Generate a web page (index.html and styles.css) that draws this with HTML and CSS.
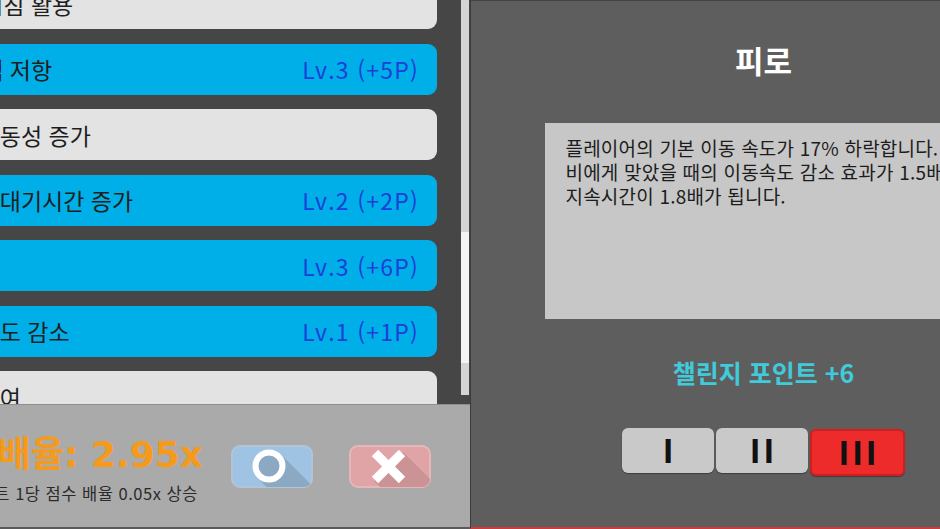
FILE: index.html
```html
<!DOCTYPE html>
<html lang="ko">
<head>
<meta charset="utf-8">
<title>챌린지 설정</title>
<link rel="stylesheet" href="styles.css">
</head>
<body>
<div class="screen">
  <section class="left">
    <div class="scroll-area">
      <div class="list">
        <div class="item off"><span class="name shifted">가시침 활용</span></div>
        <div class="item on"><span class="name shifted">넉백 저항</span><span class="lv">Lv.3 (+5P)</span></div>
        <div class="item off"><span class="name">적 이동성 증가</span></div>
        <div class="item on"><span class="name">스킬 대기시간 증가</span><span class="lv">Lv.2 (+2P)</span></div>
        <div class="item on"><span class="name blank">피로</span><span class="lv">Lv.3 (+6P)</span></div>
        <div class="item on"><span class="name">적 속도 감소</span><span class="lv">Lv.1 (+1P)</span></div>
        <div class="item off"><span class="name">독 부여</span></div>
      </div>
      <div class="scrollbar"><div class="thumb"></div></div>
    </div>
    <div class="bottom">
      <div class="score">
        <div class="rate">점수 배율: 2.95x</div>
        <div class="rate-note">포인트 1당 점수 배율 0.05x 상승</div>
      </div>
      <div class="actions">
        <svg class="act" width="82" height="43" viewBox="0 0 82 43">
          <defs><clipPath id="ok-clip"><rect x="1" y="1" width="80" height="41" rx="8"/></clipPath></defs>
          <rect x="1" y="1" width="80" height="41" rx="8" fill="#9fc3e3" stroke="#b3c5d5" stroke-width="2"/>
          <polygon points="49.7,9.3 109.7,69.3 86.3,92.7 26.3,32.7" fill="#8ca9c4" clip-path="url(#ok-clip)"/>
          <circle cx="38" cy="21" r="13.5" fill="#8ca9c4" stroke="#ffffff" stroke-width="6"/>
        </svg>
        <svg class="act" width="82" height="43" viewBox="0 0 82 43">
          <defs><clipPath id="no-clip"><rect x="1" y="1" width="80" height="41" rx="8"/></clipPath></defs>
          <rect x="1" y="1" width="80" height="41" rx="8" fill="#e0a3a6" stroke="#e6b7b9" stroke-width="2"/>
          <polygon points="25,36 54,7 114,67 85,96" fill="#cc9396" clip-path="url(#no-clip)"/>
          <line x1="26" y1="8" x2="53" y2="35" stroke="#ffffff" stroke-width="9"/>
          <line x1="53" y1="8" x2="26" y2="35" stroke="#ffffff" stroke-width="9"/>
        </svg>
      </div>
    </div>
  </section>
  <section class="right">
    <h1 class="title">피로</h1>
    <div class="desc">
      <p>플레이어의 기본 이동 속도가 17% 하락합니다.<br>비에게 맞았을 때의 이동속도 감소 효과가 1.5배가 되고<br>지속시간이 1.8배가 됩니다.</p>
    </div>
    <div class="points">챌린지 포인트 +6</div>
    <div class="levels">
      <div class="lvbtn">I</div>
      <div class="lvbtn">II</div>
      <div class="lvbtn sel">III</div>
    </div>
  </section>
</div>
</body>
</html>
```
FILE: styles.css
```css
html, body {
  margin: 0;
  height: 529px;
  overflow: hidden;
  background: #474646;
}

body {
  font-family: "Noto Sans CJK KR", "Noto Sans", sans-serif;
}

.screen {
  display: flex;
  width: 1060px;
  height: 529px;
}

/* ---- left: challenge list ---- */
.left {
  flex: 0 0 470px;
  display: flex;
  flex-direction: column;
  background: #474646;
}

.scroll-area {
  height: 404px;
  display: flex;
  overflow: hidden;
}

.list {
  flex: 0 0 437px;
  display: flex;
  flex-direction: column;
  gap: 14.5px;
  margin-top: -22px;
}

.item {
  flex: 0 0 51px;
  margin-left: -62px;
  padding: 0 18px 0 13px;
  display: flex;
  align-items: center;
  justify-content: space-between;
  border-radius: 9px;
  font-size: 23px;
  color: #1e1e1e;
  white-space: nowrap;
}

.item.on { background: #00aee8; }
.item.off { background: #e3e3e3; }

.name.shifted { margin-left: 10px; }
.name.blank { visibility: hidden; }

.lv {
  color: #1e3fd8;
  font-size: 23px;
  letter-spacing: 1.2px;
}

.scrollbar {
  flex: 0 0 8px;
  margin-left: 24px;
  height: 395px;
  background: #d4d4d4;
}

.thumb {
  margin-top: 232px;
  height: 131px;
  background: #f4f4f4;
}

/* ---- left: score multiplier ---- */
.bottom {
  flex: 1;
  display: flex;
  background: #aaaaaa;
  border-top: 1px solid #8e8e8e;
  border-bottom: 2px solid #5a5a5a;
}

.score {
  flex: 0 0 231px;
  overflow: hidden;
  padding-top: 27px;
}

.rate {
  margin-left: -81px;
  font-family: "DejaVu Sans", "Noto Sans CJK KR", sans-serif;
  font-size: 36px;
  font-weight: 700;
  line-height: 46px;
  color: #f59a1c;
  white-space: nowrap;
}

.rate-note {
  margin-top: 4px;
  margin-left: -37px;
  font-size: 16.5px;
  letter-spacing: 0.5px;
  line-height: 22px;
  color: #2a2a2a;
  white-space: nowrap;
}

.actions {
  display: flex;
  gap: 36px;
  padding-top: 40px;
}

.act { display: block; }

/* ---- right: challenge detail ---- */
.right {
  flex: 0 0 586px;
  display: flex;
  flex-direction: column;
  align-items: center;
  background: #5f5e5e;
  border-left: 1px solid #3b3b3b;
  border-top: 1px solid #454444;
  border-bottom: 2px solid #cf3a3a;
  box-sizing: border-box;
}

.title {
  margin: 39px 0 0;
  font-size: 31px;
  font-weight: 700;
  line-height: 40px;
  color: #ffffff;
}

.desc {
  margin-top: 43px;
  width: 438px;
  height: 196px;
  box-sizing: border-box;
  padding: 13px 21px;
  background: #c7c7c7;
  font-size: 19px;
  line-height: 24px;
  color: #1c1c1c;
  white-space: nowrap;
  overflow: hidden;
}

.desc p {
  margin: 0;
  letter-spacing: 0.2px;
}

.points {
  margin-top: 36px;
  font-size: 25px;
  font-weight: 700;
  line-height: 34px;
  color: #3fcbdc;
}

.levels {
  margin-top: 39px;
  display: flex;
  align-items: flex-start;
  gap: 2px;
}

.lvbtn {
  width: 92px;
  height: 45px;
  box-sizing: border-box;
  padding-left: 4px;
  border-radius: 6px;
  background: #c9c9c9;
  box-shadow: 0 1px 1px rgba(0, 0, 0, 0.35);
  display: flex;
  align-items: center;
  justify-content: center;
  font-family: "Liberation Sans", sans-serif;
  font-weight: 700;
  font-size: 35px;
  letter-spacing: 4px;
  color: #111111;
}

.lvbtn.sel {
  width: 95px;
  height: 47px;
  margin-top: 1px;
  background: #ee2b2b;
  border: 2px solid #d01f1f;
}
```
